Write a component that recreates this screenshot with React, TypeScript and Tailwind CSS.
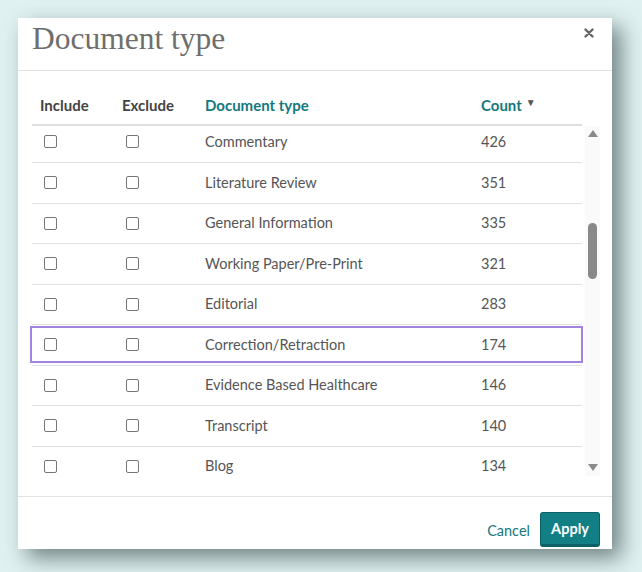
import React from "react";

const rows = [
  { name: "Commentary", count: 426 },
  { name: "Literature Review", count: 351 },
  { name: "General Information", count: 335 },
  { name: "Working Paper/Pre-Print", count: 321 },
  { name: "Editorial", count: 283 },
  { name: "Correction/Retraction", count: 174, focused: true },
  { name: "Evidence Based Healthcare", count: 146 },
  { name: "Transcript", count: 140 },
  { name: "Blog", count: 134 },
];

function Box() {
  return (
    <span className="block w-[13px] h-[13px] rounded-[2px] border border-[#767676] bg-white" />
  );
}

function Tri({ up }: { up?: boolean }) {
  return (
    <svg width="10" height="7" viewBox="0 0 10 7">
      <path d={up ? "M0 7 L5 0 L10 7 Z" : "M0 0 L10 0 L5 7 Z"} fill="#8a8a8a" />
    </svg>
  );
}

export default function App() {
  return (
    <div className="w-[642px] h-[572px] bg-[#dff1f0] pt-[18px] pl-[18px] font-['Lato',sans-serif]">
      {/* MODAL */}
      <div className="w-[594px] h-[531px] bg-white flex flex-col shadow-[9px_9px_20px_rgba(40,60,60,0.6)]">
        {/* HEADER */}
        <div className="h-[53px] border-b border-[#e3e3e3] flex items-start justify-between pl-[14px] pr-[18px]">
          <h1 className="mt-[2px] text-[31.5px] leading-[38px] text-[#6e6e6e] font-['Liberation_Serif',serif]">
            Document type
          </h1>
          <svg className="mt-[10px]" width="10" height="10" viewBox="0 0 10 10">
            <path d="M1.5 1.5 L8.5 8.5 M8.5 1.5 L1.5 8.5" stroke="#666" strokeWidth="2.4" strokeLinecap="round" />
          </svg>
        </div>

        {/* TABLE */}
        <div className="flex-1 flex flex-col pl-[14px] pr-[12px]">
          <div className="mt-[16px] h-[39px] w-[550px] flex items-center border-b-2 border-[#dedede] text-[15px] font-bold">
            <div className="w-[82px] pl-[8px] text-[#444]">Include</div>
            <div className="w-[83px] pl-[8px] text-[#444]">Exclude</div>
            <div className="w-[276px] pl-[8px] text-[#14787e]">Document type</div>
            <div className="flex-1 pl-[8px] text-[#14787e] flex items-center gap-[4px]">
              Count <span className="text-[10px] text-[#555] -mt-[6px]">▼</span>
            </div>
          </div>

          <div className="flex h-[369px]">
            <div className="w-[553px] -ml-[2px] pl-[2px] pr-[1px] overflow-hidden">
              <div className="-mt-[4.5px]">
                {rows.map((r, i) => (
                  <div
                    key={r.name}
                    className={
                      "relative h-[40.5px] flex items-center text-[14.5px] text-[#555] " +
                      (i > 0 ? "border-t border-[#e0e0e0]" : "")
                    }
                  >
                    <div className="w-[82px] pl-[12px]">
                      <Box />
                    </div>
                    <div className="w-[83px] pl-[12px]">
                      <Box />
                    </div>
                    <div className="w-[276px] pl-[8px]">{r.name}</div>
                    <div className="flex-1 pl-[8px]">{r.count}</div>
                    {r.focused && (
                      <div className="absolute -left-[2px] -right-[1px] top-[1px] bottom-[2px] border-2 border-[#a283e0]" />
                    )}
                  </div>
                ))}
              </div>
            </div>

            {/* SCROLLBAR */}
            <div className="ml-[2px] w-[15px] h-[350px] bg-[#fafafa] flex flex-col items-center">
              <div className="mt-[4px]">
                <Tri up />
              </div>
              <div className="mt-[86px] w-[9px] h-[56px] rounded-full bg-[#898989]" />
              <div className="flex-1" />
              <div className="mb-[5px]">
                <Tri />
              </div>
            </div>
          </div>
        </div>

        {/* FOOTER */}
        <div className="h-[53px] border-t border-[#e3e3e3] flex items-start justify-end gap-[10px] pr-[12px] pt-[15px]">
          <button className="mt-[8px] text-[14.5px] text-[#14787e]">Cancel</button>
          <button className="h-[35px] w-[60px] rounded-[3px] bg-[#117f84] border border-[#0d6166] border-b-[3px] text-[14.5px] font-bold text-white">
            Apply
          </button>
        </div>
      </div>
    </div>
  );
}
